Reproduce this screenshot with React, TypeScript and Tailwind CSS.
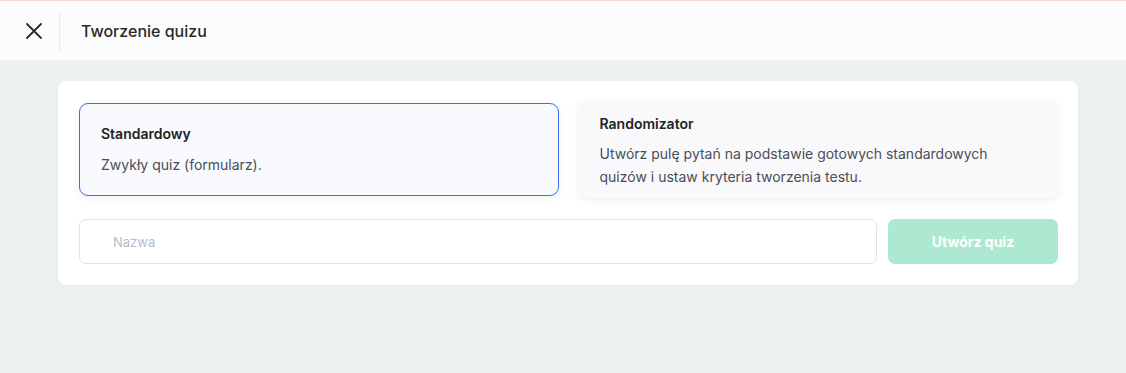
import React from "react";

export default function App() {
  return (
    <div className="min-h-[373px] w-full bg-[#eef1f1] font-['Inter',sans-serif]">
      <div className="h-px bg-[#f6d9d2]" />
      <header className="flex h-[59px] items-center bg-[#fcfcfc]">
        <button className="flex h-[59px] w-[59px] items-center pl-[25px] text-[#2b2b2b]">
          <svg width="18" height="18" viewBox="0 0 18 18" fill="none" stroke="currentColor" strokeWidth="1.8" strokeLinecap="round">
            <path d="M2 2L16 16M16 2L2 16" />
          </svg>
        </button>
        <div className="mt-[2px] h-[40px] w-px bg-[#ececec]" />
        <h1 className="pl-[21px] pt-[1px] text-[16px] font-medium text-[#2a2a2a]">Tworzenie quizu</h1>
      </header>
      <main className="pl-[58px] pr-[48px] pt-[21px]">
        <div className="rounded-lg bg-white pb-[21px] pl-[21px] pr-[20px] pt-[20px] shadow-[0_1px_4px_rgba(0,0,0,0.04)]">
          <div className="grid grid-cols-2 items-center gap-[20px]">
            <div className="rounded-[9px] border border-[#3b6cf3] bg-[#f8fafd] px-[21px] pb-[18px] pt-[20px] shadow-[0_2px_6px_rgba(60,80,120,0.08)]">
              <div className="text-[14px] font-semibold leading-[20px] text-[#222]">Standardowy</div>
              <div className="mt-[9px] text-[14px] leading-[24px] text-[#4a4d57]">Zwykły quiz (formularz).</div>
            </div>
            <div className="rounded-[9px] bg-[#f9f9fb] px-[21px] pb-[10px] pt-[13px] shadow-[0_2px_6px_rgba(60,80,120,0.1)]">
              <div className="text-[14px] font-semibold leading-[20px] text-[#222]">Randomizator</div>
              <div className="mt-[8px] pr-[40px] text-[14px] leading-[23px] text-[#4a4d57]">
                Utwórz pulę pytań na podstawie gotowych standardowych quizów i ustaw kryteria tworzenia testu.
              </div>
            </div>
          </div>
          <div className="mt-[21px] flex gap-[11px]">
            <input
              placeholder="Nazwa"
              className="h-[45px] flex-1 rounded-[7px] border border-[#e2e1ec] bg-white px-[33px] text-[13px] text-[#333] outline-none placeholder:text-[#b4bccb]"
            />
            <button className="h-[45px] w-[170px] rounded-[7px] bg-[#ade8d0] text-[14px] font-bold text-white">
              Utwórz quiz
            </button>
          </div>
        </div>
      </main>
    </div>
  );
}
